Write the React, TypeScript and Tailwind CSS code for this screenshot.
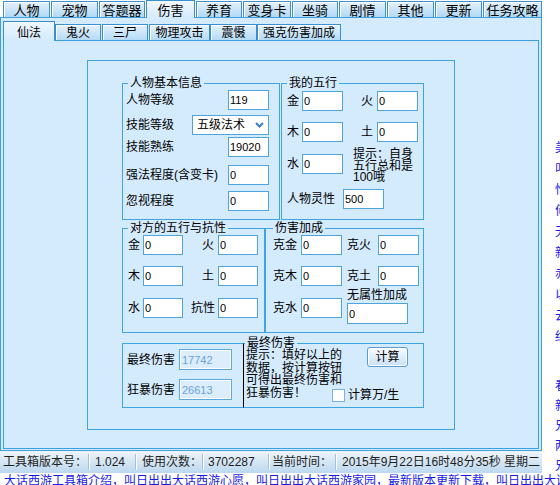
import React from 'react';

// 顶部主标签
const TOP_TABS = [
    { name: '人物', w: 'w-[47px]' },
    { name: '宠物', w: 'w-[47px]' },
    { name: '答题器', w: 'w-[46px]' },
    { name: '伤害', w: 'w-[49px]', active: true },
    { name: '养育', w: 'w-[46px]' },
    { name: '变身卡', w: 'w-[48px]' },
    { name: '坐骑', w: 'w-[46px]' },
    { name: '剧情', w: 'w-[47px]' },
    { name: '其他', w: 'w-[47px]' },
    { name: '更新', w: 'w-[47px]' },
    { name: '任务攻略', w: 'w-[59px]' },
];

// 伤害计算子标签
const SUB_TABS = [
    { name: '仙法', w: 'w-[52px]', ml: '', active: true },
    { name: '鬼火', w: 'w-[46px]', ml: '' },
    { name: '三尸', w: 'w-[46px]', ml: 'ml-px' },
    { name: '物理攻击', w: 'w-[61px]', ml: 'ml-px' },
    { name: '震慑', w: 'w-[47px]', ml: '' },
    { name: '强克伤害加成', w: 'w-[84px]', ml: '' },
];

const SIDE_A = ['美化工具', '叫日出出', '怡情小站', '何处寻觅', '无限精彩', '新手指南', '赤焰战场', '以及更多', '云游四海', '红尘情缘'];
const SIDE_B = ['看看这里', '新闻公告', '兄弟情深', '两情相悦', '兄弟帮会'];

const Box: React.FC<{ v: string; className?: string }> = ({ v, className = 'w-[41px] h-[20px]' }) => (
    <input
        readOnly
        value={v}
        className={`border border-[#4ea5dd] bg-white px-px text-[11px] text-black outline-none ${className}`}
    />
);

const ResultBox: React.FC<{ v: string }> = ({ v }) => (
    <input
        readOnly
        value={v}
        className="h-[21px] w-[53px] border border-[#5aa9e2] bg-[#dcedfc] px-[2px] text-[11px] text-[#6aa3d8] shadow-[inset_0_0_0_1px_#ffffff] outline-none"
    />
);

const LevelSelect = () => (
    <div className="flex h-[20px] w-[77px] items-center justify-between border border-[#4ea5dd] bg-white pl-[4px] pr-[4px]">
        <span>五级法术</span>
        <svg width="9" height="6" viewBox="0 0 9 6">
            <path d="M1 1l3.5 3.5L8 1" fill="none" stroke="#3a7fd0" strokeWidth="2" />
        </svg>
    </div>
);

const Sep = () => <div className="h-[16px] w-px shrink-0 bg-[#a3c1da] shadow-[1px_0_0_#ffffff]" />;

const App: React.FC = () => {
    return (
        <div className="h-[485px] w-[560px] overflow-hidden bg-white text-[12px] leading-none text-black font-['Liberation_Sans','Noto_Sans_CJK_SC',sans-serif]">
            <div className="flex h-[473px]">
                <div className="w-[542px] shrink-0">
                    {/* 主标签栏 */}
                    <div className="relative z-10 flex h-[18px] items-end gap-px pl-[3px]">
                        {TOP_TABS.map((t) =>
                            t.active ? (
                                <div
                                    key={t.name}
                                    className={`${t.w} flex h-[18px] items-center justify-center border border-b-0 border-[#3b8fd1] bg-linear-to-b from-[#f0f8fe] to-[#d4eafd] pt-px text-[13px]`}
                                >
                                    {t.name}
                                </div>
                            ) : (
                                <div
                                    key={t.name}
                                    className={`${t.w} mb-px flex h-[16px] items-center justify-center border border-b-0 border-[#3b8fd1] bg-linear-to-b from-[#e4f2fd] to-[#b0d8f4] pt-px text-[13px] shadow-[inset_1px_1px_0_#ffffff]`}
                                >
                                    {t.name}
                                </div>
                            )
                        )}
                    </div>

                    {/* 外层面板 */}
                    <div className="-mt-px h-[434px] border border-[#3c9fe0] bg-[#d4eafd] px-[2px] pb-px">
                        <div className="relative z-10 -mb-px flex h-[23px] items-end">
                            {SUB_TABS.map((t) =>
                                t.active ? (
                                    <div
                                        key={t.name}
                                        className={`${t.w} ${t.ml} flex h-[20px] items-center justify-center border border-b-0 border-[#3b8fd1] bg-linear-to-b from-[#eef7fe] to-[#d4eafd] pt-[2px]`}
                                    >
                                        {t.name}
                                    </div>
                                ) : (
                                    <div
                                        key={t.name}
                                        className={`${t.w} ${t.ml} mb-px flex h-[16px] items-center justify-center border border-b-0 border-[#3b8fd1] bg-linear-to-b from-[#e4f2fd] to-[#b4daf5] pt-px shadow-[inset_1px_1px_0_#ffffff]`}
                                    >
                                        {t.name}
                                    </div>
                                )
                            )}
                        </div>

                        <div className="h-[409px] border border-[#3c9fe0] bg-[#d4eafd] pl-[83px] pt-[19px]">
                            <div className="h-[370px] w-[368px] border border-[#3fa5e2] pl-[34px] pt-[16px]">
                                {/* 第一行 */}
                                <div className="flex gap-px">
                                    <fieldset className="h-[143px] w-[158px] border border-[#3fa5e2]">
                                        <legend className="ml-[5px] px-[2px] leading-[12px]">人物基本信息</legend>
                                        <div className="pl-[3px] pr-[10px]">
                                            <div className="mt-px flex h-[20px] items-center justify-between">
                                                <span>人物等级</span>
                                                <Box v="119" />
                                            </div>
                                            <div className="mt-[5px] flex h-[20px] items-center justify-between">
                                                <span>技能等级</span>
                                                <LevelSelect />
                                            </div>
                                            <div className="mt-[2px] flex h-[20px] items-center justify-between">
                                                <span>技能熟练</span>
                                                <Box v="19020" />
                                            </div>
                                            <div className="mt-[8px] flex h-[20px] items-center justify-between">
                                                <span className="whitespace-nowrap">强法程度(含变卡)</span>
                                                <Box v="0" />
                                            </div>
                                            <div className="mt-[6px] flex h-[20px] items-center justify-between">
                                                <span>忽视程度</span>
                                                <Box v="0" />
                                            </div>
                                        </div>
                                    </fieldset>

                                    <fieldset className="h-[143px] w-[143px] border border-[#3fa5e2]">
                                        <legend className="ml-[5px] px-[2px] leading-[12px]">我的五行</legend>
                                        <div className="pl-[5px]">
                                            <div className="mt-[2px] grid h-[20px] grid-cols-[15px_41px_34px_41px] items-center">
                                                <span>金</span>
                                                <Box v="0" />
                                                <span className="pr-[4px] text-right">火</span>
                                                <Box v="0" />
                                            </div>
                                            <div className="mt-[11px] grid h-[20px] grid-cols-[15px_41px_34px_41px] items-center">
                                                <span>木</span>
                                                <Box v="0" />
                                                <span className="pr-[4px] text-right">土</span>
                                                <Box v="0" />
                                            </div>
                                            <div className="mt-[12px] flex h-[20px] items-center">
                                                <span className="w-[15px] shrink-0">水</span>
                                                <Box v="0" />
                                                <div className="-mt-[5px] ml-[10px] self-start whitespace-nowrap leading-[11.5px]">
                                                    提示：自身<br />五行总和是<br />100哦
                                                </div>
                                            </div>
                                            <div className="mt-[15px] flex h-[20px] items-center">
                                                <span className="w-[56px] shrink-0">人物灵性</span>
                                                <Box v="500" />
                                            </div>
                                        </div>
                                    </fieldset>
                                </div>

                                {/* 第二行 */}
                                <div className="mt-[2px] flex">
                                    <fieldset className="h-[111px] w-[143px] border border-[#3fa5e2]">
                                        <legend className="ml-[5px] px-[2px] leading-[12px]">对方的五行与抗性</legend>
                                        <div className="pl-[5px]">
                                            <div className="mt-px grid h-[20px] grid-cols-[15px_40px_35px_40px] items-center">
                                                <span>金</span>
                                                <Box v="0" className="h-[20px] w-[40px]" />
                                                <span className="pr-[4px] text-right">火</span>
                                                <Box v="0" className="h-[20px] w-[40px]" />
                                            </div>
                                            <div className="mt-[11px] grid h-[20px] grid-cols-[15px_40px_35px_40px] items-center">
                                                <span>木</span>
                                                <Box v="0" className="h-[20px] w-[40px]" />
                                                <span className="pr-[4px] text-right">土</span>
                                                <Box v="0" className="h-[20px] w-[40px]" />
                                            </div>
                                            <div className="mt-[12px] grid h-[20px] grid-cols-[15px_40px_35px_40px] items-center">
                                                <span>水</span>
                                                <Box v="0" className="h-[20px] w-[40px]" />
                                                <span className="pr-[3px] text-right">抗性</span>
                                                <Box v="0" className="h-[20px] w-[40px]" />
                                            </div>
                                        </div>
                                    </fieldset>

                                    <fieldset className="h-[111px] w-[159px] border border-[#3fa5e2]">
                                        <legend className="ml-[7px] px-[2px] leading-[12px]">伤害加成</legend>
                                        <div className="pl-[7px]">
                                            <div className="mt-px grid h-[20px] grid-cols-[28px_41px_36px_41px] items-center">
                                                <span>克金</span>
                                                <Box v="0" />
                                                <span className="pl-[5px]">克火</span>
                                                <Box v="0" />
                                            </div>
                                            <div className="mt-[11px] grid h-[20px] grid-cols-[28px_41px_36px_41px] items-center">
                                                <span>克木</span>
                                                <Box v="0" />
                                                <span className="pl-[5px]">克土</span>
                                                <Box v="0" />
                                            </div>
                                            <div className="mt-[12px] flex h-[20px] items-center">
                                                <span className="w-[28px] shrink-0">克水</span>
                                                <Box v="0" />
                                                <div className="-mt-[9px] ml-[5px] self-start">
                                                    <div className="whitespace-nowrap leading-[12px]">无属性加成</div>
                                                    <Box v="0" className="mt-[2px] h-[21px] w-[61px]" />
                                                </div>
                                            </div>
                                        </div>
                                    </fieldset>
                                </div>

                                {/* 第三行：结果 */}
                                <div className="mt-[4px] flex items-start">
                                    <div className="mt-[6px] h-[65px] w-[121px] border border-r-0 border-[#3fa5e2] pl-[4px]">
                                        <div className="mt-[5px] flex h-[21px] items-center">
                                            <span className="w-[52px] shrink-0">最终伤害</span>
                                            <ResultBox v="17742" />
                                        </div>
                                        <div className="mt-[9px] flex h-[21px] items-center">
                                            <span className="w-[52px] shrink-0">狂暴伤害</span>
                                            <ResultBox v="26613" />
                                        </div>
                                    </div>

                                    <fieldset className="h-[71px] w-[181px] border border-[#3fa5e2] border-l-black">
                                        <legend className="ml-px px-[2px] leading-[12px]">最终伤害</legend>
                                        <div className="pl-[2px]">
                                            <div className="flex items-start">
                                                <div className="w-[96px] shrink-0 whitespace-nowrap leading-[12.5px]">
                                                    提示：填好以上的<br />数据，按计算按钮<br />可得出最终伤害和
                                                </div>
                                                <button className="-mt-[2px] ml-[25px] h-[20px] w-[41px] rounded-[3px] border border-[#5a9bd5] bg-linear-to-b from-[#f8fcff] to-[#c8e0f4] shadow-[inset_0_0_0_1px_#ffffff]">
                                                    计算
                                                </button>
                                            </div>
                                            <div className="flex items-start">
                                                <span className="w-[86px] shrink-0 leading-[12.5px]">狂暴伤害！</span>
                                                <div className="mt-[2.5px] h-[13px] w-[13px] shrink-0 border border-[#7bb2e0] bg-white" />
                                                <span className="ml-[3px] mt-[2px] whitespace-nowrap leading-[13px]">计算万/生</span>
                                            </div>
                                        </div>
                                    </fieldset>
                                </div>
                            </div>
                        </div>
                    </div>

                    {/* 状态栏 */}
                    <div className="flex h-[22px] items-center overflow-hidden whitespace-nowrap bg-linear-to-b from-[#eef4f9] to-[#bcd8ef] text-[#1e1e1e]">
                        <span className="w-[88px] shrink-0 pl-[3px]">工具箱版本号：</span>
                        <Sep />
                        <span className="w-[46px] shrink-0 pl-[6px]">1.024</span>
                        <Sep />
                        <span className="w-[66px] shrink-0 pl-[6px]">使用次数：</span>
                        <Sep />
                        <span className="w-[65px] shrink-0 pl-[5px]">3702287</span>
                        <Sep />
                        <span className="w-[66px] shrink-0 pl-[3px]">当前时间：</span>
                        <Sep />
                        <span className="shrink-0 pl-[6px]">2015年9月22日16时48分35秒 星期二</span>
                    </div>
                </div>

                {/* 右侧链接栏 */}
                <div className="h-[473px] w-[18px] overflow-hidden whitespace-nowrap pl-[13px] pt-[138px] text-[#1a1ae6]">
                    {SIDE_A.map((s, i) => (
                        <div key={i} className="h-[21px] leading-[21px]">{s}</div>
                    ))}
                    <div className="mt-[28px]">
                        {SIDE_B.map((s, i) => (
                            <div key={i} className="h-[20px] leading-[20px]">{s}</div>
                        ))}
                    </div>
                </div>
            </div>

            <div className="overflow-hidden whitespace-nowrap pl-[4px] pt-px leading-[14px] text-[#1a1ae6]">
                大话西游工具箱介绍，叫日出出大话西游心愿，叫日出出大话西游家园，最新版本更新下载，叫日出出大话西游论坛
            </div>
        </div>
    );
};

export default App;
